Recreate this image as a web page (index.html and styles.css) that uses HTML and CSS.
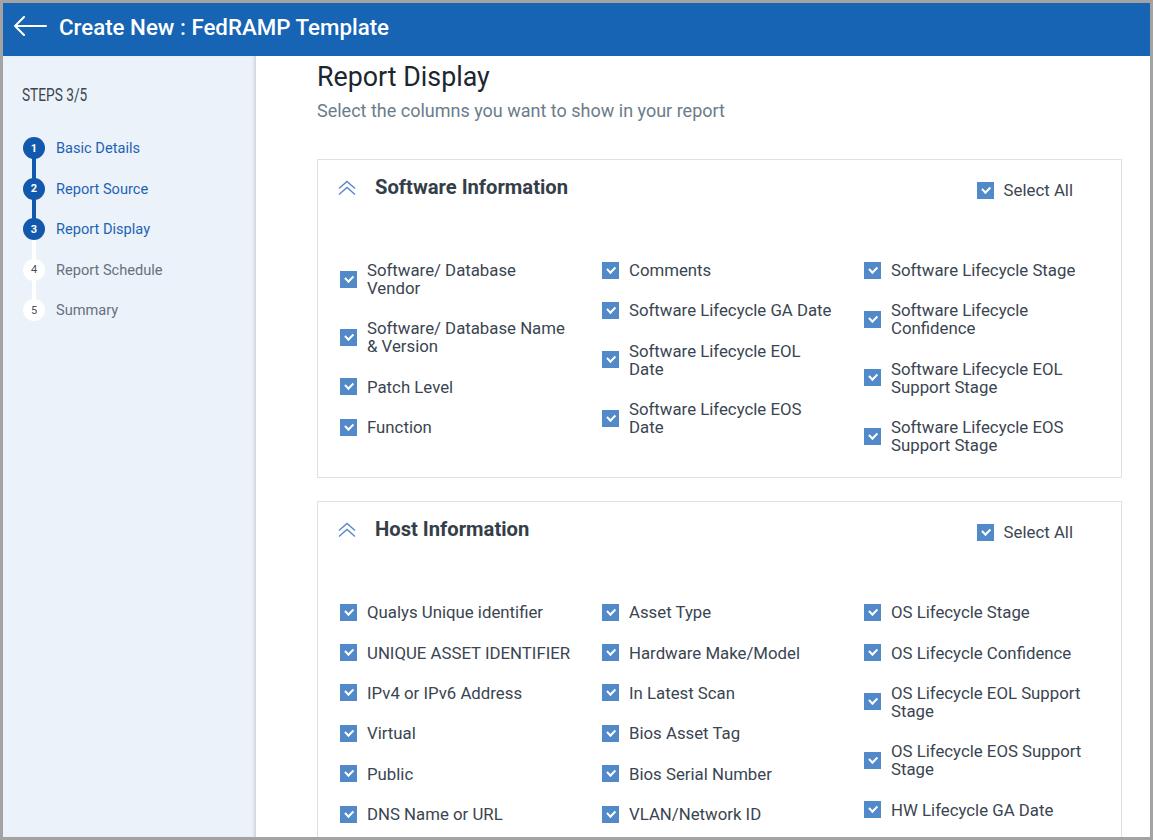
FILE: index.html
```html
<!DOCTYPE html>
<html lang="en">
<head>
<meta charset="utf-8">
<title>Create New : FedRAMP Template</title>
<link rel="stylesheet" href="styles.css">
</head>
<body>
<div class="frame">
  <header class="topbar">
    <svg class="back" width="34" height="20" viewBox="0 0 34 20" aria-hidden="true">
      <path d="M33 10H2M11 1L2 10l9 9" fill="none" stroke="#fff" stroke-width="2" stroke-linecap="round" stroke-linejoin="round"/>
    </svg>
    <h1 class="title">Create New : FedRAMP Template</h1>
  </header>
  <div class="body">
    <aside class="sidebar">
      <div class="steps-label">STEPS 3/5</div>
      <ol class="steps">
        <li class="step done"><span class="dot">1</span><span class="step-name">Basic Details</span></li>
        <li class="step done"><span class="dot">2</span><span class="step-name">Report Source</span></li>
        <li class="step current"><span class="dot">3</span><span class="step-name">Report Display</span></li>
        <li class="step todo"><span class="dot">4</span><span class="step-name">Report Schedule</span></li>
        <li class="step todo last"><span class="dot">5</span><span class="step-name">Summary</span></li>
      </ol>
    </aside>
    <main class="main">
      <h2 class="page-title">Report Display</h2>
      <p class="page-sub">Select the columns you want to show in your report</p>

      <section class="card">
        <div class="card-head">
          <svg class="chev" width="18" height="16" viewBox="0 0 18 16" aria-hidden="true">
            <path d="M1 8.5L9 1.5l8 7M1 14.5L9 7.5l8 7" fill="none" stroke="#5a86c9" stroke-width="1.4"/>
          </svg>
          <h3 class="card-title">Software Information</h3>
          <label class="select-all"><span class="cb"></span>Select All</label>
        </div>
        <div class="cols">
          <div class="col">
            <div class="item"><span class="cb"></span><span class="lbl">Software/ Database Vendor</span></div>
            <div class="item"><span class="cb"></span><span class="lbl">Software/ Database Name &amp; Version</span></div>
            <div class="item"><span class="cb"></span><span class="lbl">Patch Level</span></div>
            <div class="item"><span class="cb"></span><span class="lbl">Function</span></div>
          </div>
          <div class="col">
            <div class="item"><span class="cb"></span><span class="lbl">Comments</span></div>
            <div class="item"><span class="cb"></span><span class="lbl">Software Lifecycle GA Date</span></div>
            <div class="item"><span class="cb"></span><span class="lbl">Software Lifecycle EOL Date</span></div>
            <div class="item"><span class="cb"></span><span class="lbl">Software Lifecycle EOS Date</span></div>
          </div>
          <div class="col">
            <div class="item"><span class="cb"></span><span class="lbl">Software Lifecycle Stage</span></div>
            <div class="item"><span class="cb"></span><span class="lbl">Software Lifecycle Confidence</span></div>
            <div class="item"><span class="cb"></span><span class="lbl">Software Lifecycle EOL Support Stage</span></div>
            <div class="item"><span class="cb"></span><span class="lbl">Software Lifecycle EOS Support Stage</span></div>
          </div>
        </div>
      </section>

      <section class="card">
        <div class="card-head">
          <svg class="chev" width="18" height="16" viewBox="0 0 18 16" aria-hidden="true">
            <path d="M1 8.5L9 1.5l8 7M1 14.5L9 7.5l8 7" fill="none" stroke="#5a86c9" stroke-width="1.4"/>
          </svg>
          <h3 class="card-title">Host Information</h3>
          <label class="select-all"><span class="cb"></span>Select All</label>
        </div>
        <div class="cols">
          <div class="col">
            <div class="item"><span class="cb"></span><span class="lbl">Qualys Unique identifier</span></div>
            <div class="item"><span class="cb"></span><span class="lbl">UNIQUE ASSET IDENTIFIER</span></div>
            <div class="item"><span class="cb"></span><span class="lbl">IPv4 or IPv6 Address</span></div>
            <div class="item"><span class="cb"></span><span class="lbl">Virtual</span></div>
            <div class="item"><span class="cb"></span><span class="lbl">Public</span></div>
            <div class="item"><span class="cb"></span><span class="lbl">DNS Name or URL</span></div>
          </div>
          <div class="col">
            <div class="item"><span class="cb"></span><span class="lbl">Asset Type</span></div>
            <div class="item"><span class="cb"></span><span class="lbl">Hardware Make/Model</span></div>
            <div class="item"><span class="cb"></span><span class="lbl">In Latest Scan</span></div>
            <div class="item"><span class="cb"></span><span class="lbl">Bios Asset Tag</span></div>
            <div class="item"><span class="cb"></span><span class="lbl">Bios Serial Number</span></div>
            <div class="item"><span class="cb"></span><span class="lbl">VLAN/Network ID</span></div>
          </div>
          <div class="col">
            <div class="item"><span class="cb"></span><span class="lbl">OS Lifecycle Stage</span></div>
            <div class="item"><span class="cb"></span><span class="lbl">OS Lifecycle Confidence</span></div>
            <div class="item"><span class="cb"></span><span class="lbl">OS Lifecycle EOL Support Stage</span></div>
            <div class="item"><span class="cb"></span><span class="lbl">OS Lifecycle EOS Support Stage</span></div>
            <div class="item"><span class="cb"></span><span class="lbl">HW Lifecycle GA Date</span></div>
          </div>
        </div>
      </section>
    </main>
  </div>
</div>
</body>
</html>
```

FILE: styles.css
```css
* { box-sizing: border-box; }
html, body {
  margin: 0;
  padding: 0;
  height: 100%;
}
body {
  background: #a3a3a3;
  font-family: Roboto, "Liberation Sans", Arial, sans-serif;
  overflow: hidden;
}
.frame {
  position: relative;
  margin: 3px 3px 0 3px;
  height: 834px;
  background: #fff;
  display: flex;
  flex-direction: column;
  overflow: hidden;
}
.topbar {
  height: 53px;
  flex: 0 0 53px;
  background: #1664b3;
  display: flex;
  align-items: center;
  padding-left: 10px;
}
.back {
  display: block;
  margin-top: -8px;
}
.title {
  margin: -6px 0 0 12px;
  font-size: 22.3px;
  font-weight: 500;
  color: #fff;
}
.body {
  flex: 1;
  display: flex;
  min-height: 0;
}
.sidebar {
  width: 253px;
  flex: 0 0 253px;
  background: #ecf2f9;
  box-shadow: inset -3px 0 3px -1px rgba(0,0,0,0.12);
  padding: 29px 0 0 19px;
}
.steps-label {
  font-family: Roboto, "Liberation Sans", sans-serif;
  font-size: 19px;
  color: #3d4650;
  line-height: 20px;
  transform: scaleX(0.72);
  transform-origin: left center;
  white-space: nowrap;
}
.steps {
  list-style: none;
  margin: 32px 0 0 1px;
  padding: 0;
  display: flex;
  flex-direction: column;
  gap: 18.5px;
}
.step {
  position: relative;
  display: flex;
  align-items: center;
  height: 22px;
}
.step::after {
  content: "";
  position: absolute;
  left: 9px;
  top: 11px;
  width: 4px;
  height: 41px;
  background: #1259ad;
  z-index: 0;
}
.step.current::after, .step.todo::after { background: #fff; }
.step.last::after { display: none; }
.dot {
  position: relative;
  z-index: 1;
  width: 22px;
  height: 22px;
  border-radius: 50%;
  background: #1259ad;
  color: #fff;
  font-size: 11px;
  font-weight: 700;
  display: flex;
  align-items: center;
  justify-content: center;
}
.todo .dot {
  background: #fff;
  color: #4a4f55;
  font-weight: 400;
}
.step-name {
  margin-left: 11px;
  font-size: 14.6px;
  color: #1d63b5;
}
.todo .step-name { color: #66717d; }

.main {
  flex: 1;
  padding: 0 28px 0 61px;
  overflow: hidden;
}
.page-title {
  margin: 6px 0 0 0;
  font-size: 26.8px;
  line-height: 30px;
  font-weight: 400;
  color: #1c2630;
}
.page-sub {
  margin: 9px 0 0 0;
  font-size: 18px;
  line-height: 20px;
  color: #6b7c8b;
}
.card {
  border: 1px solid #dbe2e8;
  margin-top: 38px;
  padding: 17px 20px 23px 20px;
}
.card + .card { margin-top: 23px; }
.card-head {
  display: flex;
  align-items: flex-start;
  height: 20px;
}
.chev {
  display: block;
  margin: 3px 0 0 0;
}
.card-title {
  margin: 0 0 0 19px;
  font-size: 20.2px;
  line-height: 20px;
  font-weight: 700;
  color: #343e48;
}
.select-all {
  margin-left: auto;
  margin-right: 28px;
  margin-top: 4px;
  display: flex;
  align-items: center;
  gap: 10px;
  font-size: 16.8px;
  line-height: 18px;
  color: #3b4652;
}
.cb {
  flex: 0 0 17px;
  width: 17px;
  height: 17px;
  background: #5189c9;
  position: relative;
}
.cb::after {
  content: "";
  position: absolute;
  left: 5px;
  top: 4px;
  width: 6px;
  height: 3.5px;
  border-left: 2px solid #fff;
  border-bottom: 2px solid #fff;
  transform: rotate(-45deg);
}
.cols {
  margin-top: 64px;
  display: grid;
  grid-template-columns: 262px 262px 1fr;
  margin-left: 2px;
}
.col {
  display: flex;
  flex-direction: column;
  gap: 22.4px;
}
.item {
  display: flex;
  align-items: center;
  gap: 10px;
}
.lbl {
  font-size: 16.8px;
  line-height: 18px;
  color: #3a4551;
  max-width: 206px;
}
```
